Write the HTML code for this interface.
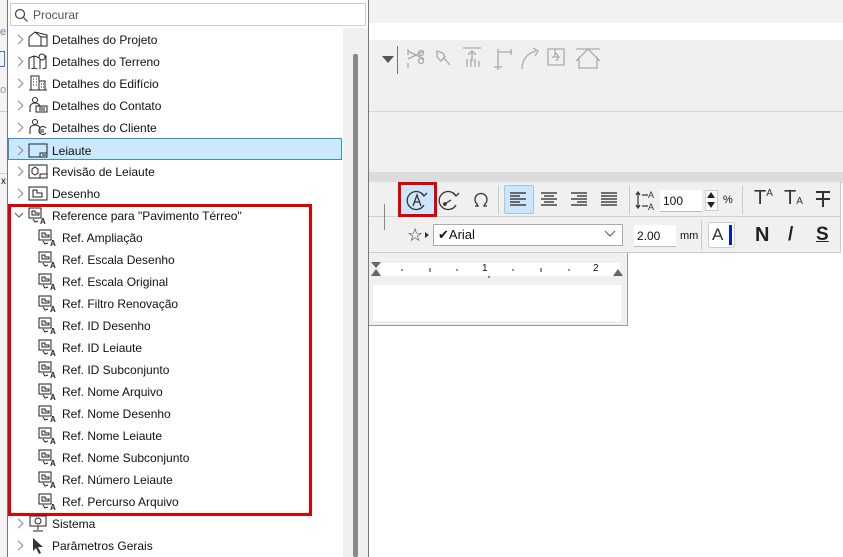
<!DOCTYPE html>
<html><head><meta charset="utf-8"><style>
*{margin:0;padding:0;box-sizing:border-box}
body{width:843px;height:557px;overflow:hidden;background:#fff;font-family:"Liberation Sans",sans-serif;font-size:12px;color:#111;position:relative}
.a{position:absolute}
.row{position:absolute;left:9px;width:333px;height:22px;line-height:22px}
.row .t{position:absolute;left:43px;top:1px;white-space:nowrap}
.row .c{position:absolute;left:8px;top:7px;width:6px;height:10px}
.row .c::before{content:"";position:absolute;left:-2px;top:1px;width:6px;height:6px;border-right:1px solid #888;border-top:1px solid #888;transform:rotate(45deg)}
.sub .t{left:53px}
.ic{position:absolute;left:19px;top:3px}
.sub .ic{left:29px;top:3px}
.tb{color:#333}
</style></head><body>
<div class="a" style="left:0;top:0;width:8px;height:557px;background:#f3f3f3"></div>
<div class="a" style="left:0;top:26px;font-size:11px;color:#6a8ab0">es</div>
<div class="a" style="left:0;top:51px;width:5px;height:16px;border:1px solid #3a78c8;border-left:none"></div>
<div class="a" style="left:0;top:84px;font-size:11px;color:#999">ol</div>
<div class="a" style="left:0;top:111px;width:8px;height:1px;background:#ccc"></div>
<div class="a" style="left:0;top:173px;width:8px;height:1px;background:#ccc"></div>
<div class="a" style="left:1px;top:176px;font-size:10px">x</div>
<div class="a" style="left:369px;top:0;width:474px;height:23px;background:#f2f2f2"></div>
<div class="a" style="left:369px;top:40px;width:474px;height:132px;background:#f0f0f0"></div>
<div class="a" style="left:369px;top:111px;width:474px;height:1px;background:#d8d8d8"></div>
<div class="a" style="left:369px;top:172px;width:474px;height:11px;background:#dcdcdc"></div>
<div class="a" style="left:382px;top:56px;width:0;height:0;border-left:6px solid transparent;border-right:6px solid transparent;border-top:7px solid #555"></div>
<div class="a" style="left:397px;top:46px;width:1px;height:28px;background:#777"></div>
<svg class="a" style="left:405px;top:45px" width="200" height="30" fill="none" stroke="#aaa" stroke-width="1.3">
<path d="M3 4v6M3 14l16-8M3 6l16 8M3 18v5"/><circle cx="16" cy="8" r="2.5"/><circle cx="16" cy="16" r="2.5"/>
<path d="M32 6l6 2 2 4-4 4-4-4zM38 12l7 8"/>
<path d="M58 3h18M67 6v10M63 10l4-4 4 4M62 14v8M66 14v8M70 14v8M74 16v6"/>
<path d="M93 25V7h14M93 7v-3M106 4v6M89 22h8"/>
<path d="M117 24c0-10 6-16 14-18M128 3l5 3-3 5"/>
<path d="M143 4h16v16h-16zM147 12h6M151 8l3 4-3 4M150 4v7"/>
<path d="M171 16l12-12 12 12M174 13v10h18v-10M171 4h24"/>
</svg>
<div class="a" style="left:369px;top:182px;width:472px;height:71px;background:#f0f0f0;border-bottom:1px solid #ccc;border-right:1px solid #ccc"></div>
<div class="a" style="left:369px;top:216px;width:472px;height:1px;background:#d0d0d0"></div>
<div class="a" style="left:384px;top:204px;width:1px;height:26px;background:#888"></div>
<div class="a" style="left:398px;top:182px;width:39px;height:35px;border:3px solid #e00000;background:#cde6fb"></div>
<svg class="a" style="left:405px;top:188px" width="100" height="24" fill="none" stroke="#333" stroke-width="1.3">
<path d="M19 8a9 9 0 1 0 0 9"/><path d="M16 5l3 3 3-3"/><path d="M8 18l4-11 4 11M9.5 14h5"/>
<path d="M51 8a9 9 0 1 0 0 9M48 5l3 3 3-3M38 17l8-5"/><circle cx="40" cy="16" r="1.2"/>
<path d="M70 18h3l-1-2a6 6 0 1 1 8 0l-1 2h3"/>
</svg>
<div class="a" style="left:498px;top:186px;width:1px;height:28px;background:#c8c8c8"></div>
<div class="a" style="left:504px;top:185px;width:30px;height:29px;background:#cde6fb;border:1px solid #99c9ef;border-radius:2px"></div>
<svg class="a" style="left:510px;top:192px" width="110" height="16" stroke="#222" stroke-width="1.2">
<path d="M0 1h16M0 4h10M0 7h16M0 10h10M0 13h16"/>
<path d="M31 1h16M34 4h10M31 7h16M34 10h10M31 13h16"/>
<path d="M61 1h16M67 4h10M61 7h16M67 10h10M61 13h16"/>
<path d="M91 1h16M91 4h16M91 7h16M91 10h16M91 13h16"/>
</svg>
<div class="a" style="left:629px;top:186px;width:1px;height:28px;background:#c8c8c8"></div>
<svg class="a" style="left:635px;top:189px" width="22" height="22" stroke="#333" stroke-width="1.2" fill="none"><path d="M3 4v14M1 6l2-3 2 3M1 16l2 3 2-3M7 6h6M7 17h6"/><text x="13" y="9" font-size="9" fill="#333" stroke="none" font-family="Liberation Sans">A</text><text x="13" y="21" font-size="9" fill="#333" stroke="none" font-family="Liberation Sans">A</text></svg>
<div class="a" style="left:660px;top:190px;width:42px;height:22px;background:#fff;border-bottom:1px solid #bbb;line-height:22px;padding-left:3px">100</div>
<div class="a" style="left:705px;top:190px;width:13px;height:21px;background:#fff;border:1px solid #ccc"></div>
<div class="a" style="left:707px;top:192px;border-left:4px solid transparent;border-right:4px solid transparent;border-bottom:6px solid #222"></div>
<div class="a" style="left:707px;top:202px;border-left:4px solid transparent;border-right:4px solid transparent;border-top:6px solid #222"></div>
<div class="a" style="left:723px;top:194px;font-size:11px">%</div>
<div class="a" style="left:742px;top:186px;width:1px;height:28px;background:#c8c8c8"></div>
<div class="a tb" style="left:754px;top:187px;font-size:20px">T<span style="font-size:10px;vertical-align:8px">A</span></div>
<div class="a tb" style="left:784px;top:187px;font-size:20px">T<span style="font-size:10px">A</span></div>
<svg class="a" style="left:814px;top:190px" width="18" height="18" stroke="#333" stroke-width="2"><path d="M2 2h14M9 2v15M2 9h14"/></svg>
<div class="a" style="left:407px;top:225px;font-size:18px;line-height:20px;color:#333">☆</div>
<div class="a" style="left:425px;top:232px;border-top:3px solid transparent;border-bottom:3px solid transparent;border-left:4px solid #333"></div>
<div class="a" style="left:433px;top:224px;width:190px;height:22px;background:#fff;border:1px solid #aaa;line-height:20px;padding-left:4px;font-size:13px">✔Arial</div>
<svg class="a" style="left:604px;top:230px" width="12" height="8" fill="none" stroke="#555"><path d="M1 1l5 5 5-5"/></svg>
<div class="a" style="left:634px;top:225px;width:42px;height:22px;background:#fff;border-bottom:1px solid #bbb;line-height:22px;padding-left:3px">2.00</div>
<div class="a" style="left:680px;top:230px;font-size:11px">mm</div>
<div class="a" style="left:701px;top:220px;width:1px;height:30px;background:#c8c8c8"></div>
<div class="a" style="left:708px;top:222px;width:27px;height:26px;background:#fff;border:1px solid #ccc;border-radius:3px"></div>
<div class="a" style="left:712px;top:225px;font-size:17px;color:#333">A</div>
<div class="a" style="left:729px;top:225px;width:3px;height:20px;background:#0018e0"></div>
<div class="a" style="left:755px;top:224px;font-size:20px;font-weight:bold;color:#222">N</div>
<div class="a" style="left:788px;top:224px;font-size:19px;font-weight:bold;color:#222">/</div>
<div class="a" style="left:816px;top:224px;font-size:19px;font-weight:bold;color:#222;text-decoration:underline">S</div>
<div class="a" style="left:369px;top:253px;width:259px;height:73px;background:#f0f0f0;border:1px solid #999;border-top:none;border-left:none"></div>
<div class="a" style="left:380px;top:263px;width:240px;height:13px;background:#fff"></div>
<div class="a" style="left:373px;top:285px;width:248px;height:36px;background:#fff"></div>
<div class="a" style="left:371px;top:262px;border-left:5px solid transparent;border-right:5px solid transparent;border-top:6px solid #666"></div>
<div class="a" style="left:371px;top:269px;border-left:5px solid transparent;border-right:5px solid transparent;border-bottom:7px solid #666"></div>
<div class="a" style="left:613px;top:269px;border-left:5px solid transparent;border-right:5px solid transparent;border-bottom:7px solid #666"></div>
<div class="a" style="left:482px;top:263px;font-size:10px">1</div>
<div class="a" style="left:593px;top:263px;font-size:10px">2</div>
<svg class="a" style="left:380px;top:264px" width="230" height="16" stroke="#222"><path d="M22 5v2M50 4v4M77 5v2M133 5v2M161 4v4M189 5v2M109 12v2"/></svg>
<div class="a" style="left:7px;top:0;width:362px;height:557px;background:#fff;border-left:1px solid #777;border-right:1px solid #777"></div>
<div class="a" style="left:10px;top:3px;width:356px;height:23px;border:1px solid #ccc;background:#fff"></div>
<svg class="a" style="left:14px;top:8px" width="14" height="14" fill="none" stroke="#444" stroke-width="1.2"><circle cx="6" cy="6" r="4.5"/><path d="M9.5 9.5l4 4"/></svg>
<div class="a" style="left:33px;top:8px;color:#555">Procurar</div>
<div class="a" style="left:343px;top:28px;width:25px;height:529px;background:#f0f0f0"></div>
<div class="a" style="left:353px;top:54px;width:5px;height:503px;background:#888;border-radius:2px"></div>

<div class="row" style="top:28px"><span class="c"></span><svg class="ic" width="20" height="16" fill="none" stroke="#222"><path d="M1 15V6l6-5 12 3v11zM1 15h18M7 1l6 5v9M13 6h6"/></svg><span class="t">Detalhes do Projeto</span></div>
<div class="row" style="top:50px"><span class="c"></span><svg class="ic" width="20" height="16" fill="none" stroke="#222"><path d="M1 5l5-2 6 2 6-2v12l-6 2-6-2-5 2zM6 3v12M12 7v10"/><circle cx="14" cy="4" r="3" fill="#fff"/></svg><span class="t">Detalhes do Terreno</span></div>
<div class="row" style="top:72px"><span class="c"></span><svg class="ic" width="20" height="16" fill="none" stroke="#222"><path d="M3 15V1h8v14M11 6h6v9M1 15h18M5 4h1M8 4h1M5 7h1M8 7h1M5 10h1M8 10h1M13 9h1M15 9h1M13 12h1M15 12h1"/></svg><span class="t">Detalhes do Edifício</span></div>
<div class="row" style="top:94px"><span class="c"></span><svg class="ic" width="20" height="16" fill="none" stroke="#222"><circle cx="7" cy="3" r="2.5"/><path d="M2 15v-5a5 4 0 0 1 10 0M8 9h11v6H8zM11 11h6M11 13h6"/></svg><span class="t">Detalhes do Contato</span></div>
<div class="row" style="top:116px"><span class="c"></span><svg class="ic" width="20" height="16" fill="none" stroke="#222"><circle cx="7" cy="3" r="2.5"/><path d="M2 15v-5a5 4 0 0 1 10 0M18 9a4 4 0 1 0 0 5M11 11h5M11 13h5"/></svg><span class="t">Detalhes do Cliente</span></div>
<div class="row" style="top:138px;background:#cce8ff;border:1px solid #3c8bd8;left:8px;width:334px"><span class="c"></span><svg class="ic" width="20" height="16" fill="none" stroke="#222"><path d="M1 2h18v13H1zM12 15v-4h7M14 13h4"/></svg><span class="t">Leiaute</span></div>
<div class="row" style="top:160px"><span class="c"></span><svg class="ic" width="20" height="16" fill="none" stroke="#222"><path d="M1 2h18v13H1zM12 15v-4h7"/><path d="M4 6l3-2 3 2v4l-3 2-3-2z"/></svg><span class="t">Revisão de Leiaute</span></div>
<div class="row" style="top:182px"><span class="c"></span><svg class="ic" width="20" height="16" fill="none" stroke="#222"><path d="M1 2h18v13H1zM5 12V5h4v3h5v4z"/></svg><span class="t">Desenho</span></div>
<div class="row" style="top:204px"><svg class="a" style="left:5px;top:8px" width="10" height="7" fill="none" stroke="#555"><path d="M1 1l4 4 4-4"/></svg><svg class="ic" width="20" height="17" fill="none" stroke="#222"><path d="M1 1h12v10H1zM4 8V4h3v2h4v2z"/><path d="M5 12l2 3 3-1" /><text x="12" y="17" font-size="8" fill="#222" stroke="none" font-family="Liberation Sans" font-weight="bold">A</text></svg><span class="t">Reference para "Pavimento Térreo"</span></div>

<div class="a" style="left:8px;top:204px;width:304px;height:312px;border:3px solid #e00000"></div>

<div class="row" style="top:512px"><span class="c"></span><svg class="ic" width="20" height="17" fill="none" stroke="#222"><path d="M2 1h16v10H2zM10 11v4M5 16h10"/><circle cx="10" cy="6" r="3"/></svg><span class="t">Sistema</span></div>
<div class="row" style="top:534px"><span class="c"></span><svg class="ic" width="20" height="17"><path d="M5 1l10 9h-5l3 6-2 1-3-6-3 3z" fill="#333"/></svg><span class="t">Parâmetros Gerais</span></div>

<div class="row sub" style="top:226px"><svg class="ic" width="20" height="17" fill="none" stroke="#222"><path d="M1 1h12v10H1zM4 8V4h3v2h4v2zM5 12l2 3 3-1"/><text x="12" y="17" font-size="8" fill="#222" stroke="none" font-family="Liberation Sans" font-weight="bold">A</text></svg><span class="t">Ref. Ampliação</span></div>
<div class="row sub" style="top:248px"><svg class="ic" width="20" height="17" fill="none" stroke="#222"><path d="M1 1h12v10H1zM4 8V4h3v2h4v2zM5 12l2 3 3-1"/><text x="12" y="17" font-size="8" fill="#222" stroke="none" font-family="Liberation Sans" font-weight="bold">A</text></svg><span class="t">Ref. Escala Desenho</span></div>
<div class="row sub" style="top:270px"><svg class="ic" width="20" height="17" fill="none" stroke="#222"><path d="M1 1h12v10H1zM4 8V4h3v2h4v2zM5 12l2 3 3-1"/><text x="12" y="17" font-size="8" fill="#222" stroke="none" font-family="Liberation Sans" font-weight="bold">A</text></svg><span class="t">Ref. Escala Original</span></div>
<div class="row sub" style="top:292px"><svg class="ic" width="20" height="17" fill="none" stroke="#222"><path d="M1 1h12v10H1zM4 8V4h3v2h4v2zM5 12l2 3 3-1"/><text x="12" y="17" font-size="8" fill="#222" stroke="none" font-family="Liberation Sans" font-weight="bold">A</text></svg><span class="t">Ref. Filtro Renovação</span></div>
<div class="row sub" style="top:314px"><svg class="ic" width="20" height="17" fill="none" stroke="#222"><path d="M1 1h12v10H1zM4 8V4h3v2h4v2zM5 12l2 3 3-1"/><text x="12" y="17" font-size="8" fill="#222" stroke="none" font-family="Liberation Sans" font-weight="bold">A</text></svg><span class="t">Ref. ID Desenho</span></div>
<div class="row sub" style="top:336px"><svg class="ic" width="20" height="17" fill="none" stroke="#222"><path d="M1 1h12v10H1zM4 8V4h3v2h4v2zM5 12l2 3 3-1"/><text x="12" y="17" font-size="8" fill="#222" stroke="none" font-family="Liberation Sans" font-weight="bold">A</text></svg><span class="t">Ref. ID Leiaute</span></div>
<div class="row sub" style="top:358px"><svg class="ic" width="20" height="17" fill="none" stroke="#222"><path d="M1 1h12v10H1zM4 8V4h3v2h4v2zM5 12l2 3 3-1"/><text x="12" y="17" font-size="8" fill="#222" stroke="none" font-family="Liberation Sans" font-weight="bold">A</text></svg><span class="t">Ref. ID Subconjunto</span></div>
<div class="row sub" style="top:380px"><svg class="ic" width="20" height="17" fill="none" stroke="#222"><path d="M1 1h12v10H1zM4 8V4h3v2h4v2zM5 12l2 3 3-1"/><text x="12" y="17" font-size="8" fill="#222" stroke="none" font-family="Liberation Sans" font-weight="bold">A</text></svg><span class="t">Ref. Nome Arquivo</span></div>
<div class="row sub" style="top:402px"><svg class="ic" width="20" height="17" fill="none" stroke="#222"><path d="M1 1h12v10H1zM4 8V4h3v2h4v2zM5 12l2 3 3-1"/><text x="12" y="17" font-size="8" fill="#222" stroke="none" font-family="Liberation Sans" font-weight="bold">A</text></svg><span class="t">Ref. Nome Desenho</span></div>
<div class="row sub" style="top:424px"><svg class="ic" width="20" height="17" fill="none" stroke="#222"><path d="M1 1h12v10H1zM4 8V4h3v2h4v2zM5 12l2 3 3-1"/><text x="12" y="17" font-size="8" fill="#222" stroke="none" font-family="Liberation Sans" font-weight="bold">A</text></svg><span class="t">Ref. Nome Leiaute</span></div>
<div class="row sub" style="top:446px"><svg class="ic" width="20" height="17" fill="none" stroke="#222"><path d="M1 1h12v10H1zM4 8V4h3v2h4v2zM5 12l2 3 3-1"/><text x="12" y="17" font-size="8" fill="#222" stroke="none" font-family="Liberation Sans" font-weight="bold">A</text></svg><span class="t">Ref. Nome Subconjunto</span></div>
<div class="row sub" style="top:468px"><svg class="ic" width="20" height="17" fill="none" stroke="#222"><path d="M1 1h12v10H1zM4 8V4h3v2h4v2zM5 12l2 3 3-1"/><text x="12" y="17" font-size="8" fill="#222" stroke="none" font-family="Liberation Sans" font-weight="bold">A</text></svg><span class="t">Ref. Número Leiaute</span></div>
<div class="row sub" style="top:490px"><svg class="ic" width="20" height="17" fill="none" stroke="#222"><path d="M1 1h12v10H1zM4 8V4h3v2h4v2zM5 12l2 3 3-1"/><text x="12" y="17" font-size="8" fill="#222" stroke="none" font-family="Liberation Sans" font-weight="bold">A</text></svg><span class="t">Ref. Percurso Arquivo</span></div>
</body></html>
